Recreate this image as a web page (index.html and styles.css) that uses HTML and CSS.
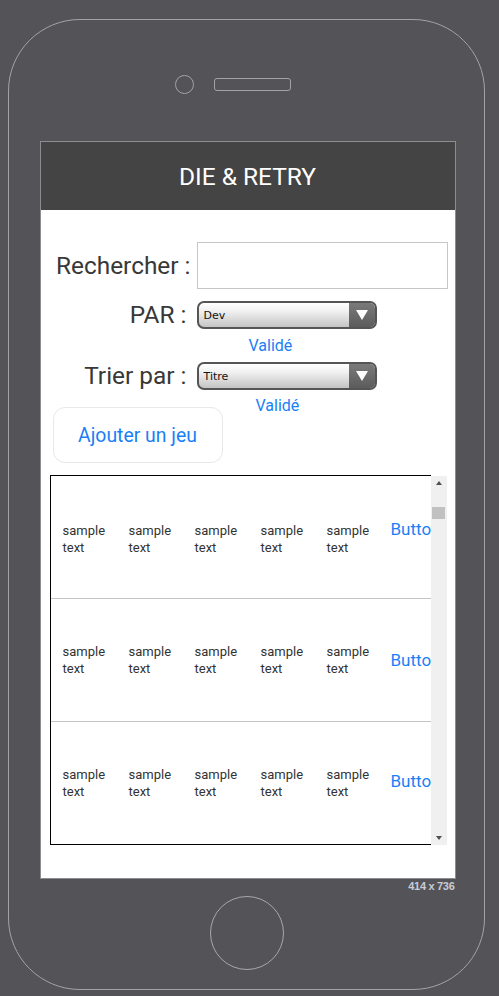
FILE: index.html
```html
<!DOCTYPE html>
<html lang="fr">
<head>
<meta charset="utf-8">
<title>Die &amp; Retry</title>
<link rel="stylesheet" href="styles.css">
</head>
<body>
<div class="phone">
  <div class="sensors"><span class="camera"></span><span class="speaker"></span></div>
  <div class="screen">
    <header class="appbar">DIE &amp; RETRY</header>
    <div class="form">
      <div class="line line-search">
        <span class="lbl">Rechercher :</span>
        <span class="field"></span>
      </div>
      <div class="line line-par">
        <span class="lbl lbl-short">PAR :</span>
        <div class="select"><span class="select-text">Dev</span><span class="select-arrow"><span class="tri"></span></span></div>
      </div>
      <a class="link link-1">Validé</a>
      <div class="line line-sort">
        <span class="lbl lbl-short">Trier par :</span>
        <div class="select"><span class="select-text">Titre</span><span class="select-arrow"><span class="tri"></span></span></div>
      </div>
      <div class="line-actions">
        <button class="add-btn" type="button">Ajouter un jeu</button>
        <a class="link link-2">Validé</a>
      </div>
      <div class="list-wrap">
        <div class="list">
          <div class="row row-top">
            <div class="cells">
              <span class="cell">sample text</span>
              <span class="cell">sample text</span>
              <span class="cell">sample text</span>
              <span class="cell">sample text</span>
              <span class="cell">sample text</span>
              <span class="btn-cell">Button</span>
            </div>
          </div>
          <div class="row">
            <div class="cells">
              <span class="cell">sample text</span>
              <span class="cell">sample text</span>
              <span class="cell">sample text</span>
              <span class="cell">sample text</span>
              <span class="cell">sample text</span>
              <span class="btn-cell">Button</span>
            </div>
          </div>
          <div class="row row-mid">
            <div class="cells">
              <span class="cell">sample text</span>
              <span class="cell">sample text</span>
              <span class="cell">sample text</span>
              <span class="cell">sample text</span>
              <span class="cell">sample text</span>
              <span class="btn-cell">Button</span>
            </div>
          </div>
        </div>
        <div class="scrollbar">
          <span class="arrow-up"></span>
          <span class="thumb"></span>
          <span class="arrow-down"></span>
        </div>
      </div>
    </div>
  </div>
  <div class="size">414 x 736</div>
  <div class="home"></div>
</div>
</body>
</html>
```
FILE: styles.css
```css
html, body {
  margin: 0;
  padding: 0;
}
body {
  width: 499px;
  height: 996px;
  overflow: hidden;
  background: #545358;
  font-family: Roboto, "Liberation Sans", sans-serif;
}
.phone {
  box-sizing: border-box;
  margin: 19px 0 0 8px;
  width: 477px;
  height: 971px;
  border: 1.5px solid #a3a3a7;
  border-radius: 72px;
  display: flex;
  flex-direction: column;
}
.sensors {
  display: flex;
  align-items: center;
  margin-top: 55px;
  padding-left: 166px;
}
.camera {
  box-sizing: border-box;
  width: 19px;
  height: 19px;
  border: 1.5px solid #a3a3a7;
  border-radius: 50%;
}
.speaker {
  box-sizing: border-box;
  width: 77px;
  height: 13px;
  margin-left: 20px;
  border: 1.5px solid #a3a3a7;
  border-radius: 3px;
}
.screen {
  box-sizing: border-box;
  margin-top: 47px;
  margin-left: 30.5px;
  width: 416px;
  height: 738px;
  border: 1px solid #8d8d90;
  background: #fff;
  overflow: hidden;
}
.appbar {
  height: 68px;
  line-height: 70px;
  background: #444444;
  color: #fff;
  text-align: center;
  font-size: 24.5px;
}
.form {
  display: flex;
  flex-direction: column;
}
.line {
  display: flex;
  align-items: center;
}
.lbl {
  box-sizing: border-box;
  width: 150px;
  text-align: right;
  font-size: 24.4px;
  line-height: 28px;
  color: #383838;
  white-space: nowrap;
}
.lbl-short {
  padding-right: 4px;
}
.line-search {
  margin-top: 32px;
}
.field {
  box-sizing: border-box;
  margin-left: 6px;
  width: 251px;
  height: 47px;
  border: 1px solid #c6c6c6;
}
.line-par {
  margin-top: 12px;
}
.select {
  box-sizing: border-box;
  margin-left: 6px;
  width: 180px;
  height: 28px;
  border: 2px solid #555;
  border-radius: 7px;
  background: linear-gradient(#ffffff, #f0f0f0 35%, #c4c4c4);
  display: flex;
  align-items: center;
  overflow: hidden;
}
.select-text {
  flex: 1;
  padding-left: 5px;
  font-family: "DejaVu Sans", Verdana, sans-serif;
  font-size: 11px;
  color: #111;
}
.select-arrow {
  width: 26px;
  height: 100%;
  background: linear-gradient(#7a7a7a, #5c5c5c);
  display: flex;
  align-items: center;
  justify-content: center;
}
.tri {
  width: 0;
  height: 0;
  border-left: 6.5px solid transparent;
  border-right: 6.5px solid transparent;
  border-top: 10px solid #fff;
}
.link {
  font-size: 16px;
  line-height: 19px;
  color: #1a7ff6;
  cursor: pointer;
}
.link-1 {
  margin-top: 7px;
  margin-left: 208px;
}
.line-sort {
  margin-top: 7px;
}
.line-actions {
  display: flex;
  align-items: flex-start;
  margin-top: 6px;
}
.add-btn {
  box-sizing: border-box;
  margin-top: 11px;
  margin-left: 12px;
  width: 170px;
  height: 56px;
  border: 1px solid #e8e8e8;
  border-radius: 12px;
  background: #fff;
  color: #1a7ff6;
  font-family: Roboto, "Liberation Sans", sans-serif;
  font-size: 19.4px;
  padding: 0;
}
.link-2 {
  margin-left: 33px;
}
.list-wrap {
  display: flex;
  align-items: flex-start;
  margin-top: 12px;
  margin-left: 9px;
}
.list {
  box-sizing: border-box;
  width: 381px;
  height: 370px;
  border: 1px solid #000;
  border-right: none;
  overflow: hidden;
}
.row {
  height: 122px;
  border-bottom: 1px solid #c4c4c4;
  display: flex;
  align-items: center;
  padding-left: 12px;
}
.cells {
  display: flex;
  align-items: center;
  white-space: nowrap;
}
.row-top .cells {
  align-items: baseline;
}
.row-mid .btn-cell {
  margin-bottom: 5px;
}
.cell {
  flex: none;
  box-sizing: border-box;
  width: 66px;
  padding-right: 20px;
  white-space: normal;
  font-size: 13px;
  line-height: 17px;
  color: #333;
}
.btn-cell {
  flex: none;
  margin-left: -2px;
  font-size: 17px;
  color: #1a7ff6;
}
.scrollbar {
  margin-top: 1px;
  width: 16px;
  height: 369px;
  background: #f0f0f0;
  display: flex;
  flex-direction: column;
  align-items: center;
}
.arrow-up {
  margin-top: 5px;
  width: 0;
  height: 0;
  border-left: 3.5px solid transparent;
  border-right: 3.5px solid transparent;
  border-bottom: 4px solid #505050;
}
.thumb {
  margin-top: 22px;
  width: 13px;
  height: 12px;
  background: #c1c1c1;
}
.arrow-down {
  margin-top: auto;
  margin-bottom: 5px;
  width: 0;
  height: 0;
  border-left: 3.5px solid transparent;
  border-right: 3.5px solid transparent;
  border-top: 4px solid #505050;
}
.size {
  margin-top: 1px;
  margin-left: 30.5px;
  width: 415px;
  text-align: right;
  font-family: "Liberation Sans", Arial, sans-serif;
  font-weight: bold;
  font-size: 11px;
  line-height: 13px;
  letter-spacing: -0.3px;
  color: #c9cbd6;
}
.home {
  box-sizing: border-box;
  margin-top: 3px;
  margin-left: 200.5px;
  width: 74px;
  height: 74px;
  border: 1.5px solid #a8a8ac;
  border-radius: 50%;
}
```
